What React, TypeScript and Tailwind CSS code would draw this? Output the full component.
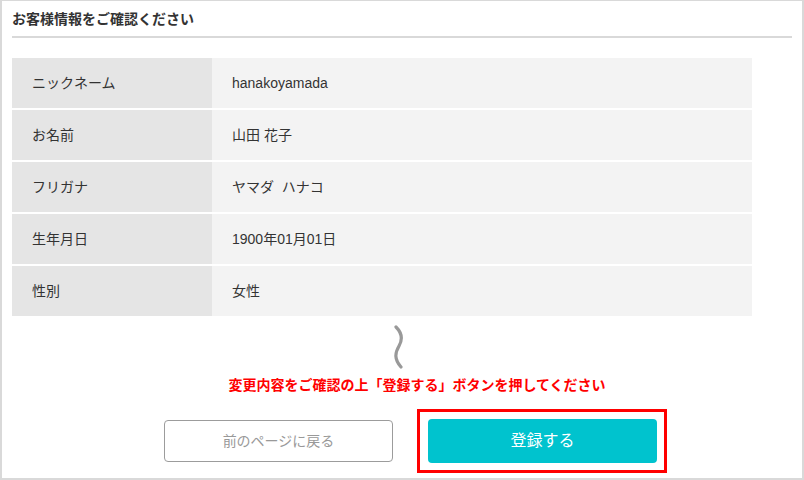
import React from "react";

const rows: [string, string][] = [
  ["ニックネーム", "hanakoyamada"],
  ["お名前", "山田 花子"],
  ["フリガナ", "ヤマダ\u00a0\u00a0ハナコ"],
  ["生年月日", "1900年01月01日"],
  ["性別", "女性"],
];

const font = { fontFamily: '"Liberation Sans", "Noto Sans CJK JP", sans-serif' };

export default function App() {
  return (
    <div
      className="w-[804px] h-[480px] bg-white border-2 border-t border-[#d9d9d9] text-[#333] box-border overflow-hidden"
      style={font}
    >
      <div className="px-[10px] pt-[8px]">
        <div className="pb-[7px] border-b-2 border-[#d9d9d9] text-[14px] leading-[20px] font-bold text-[#333]">
          お客様情報をご確認ください
        </div>
        <div className="mt-[20px] w-[740px] flex flex-col gap-[2px]">
          {rows.map(([k, v]) => (
            <div key={k} className="flex h-[50px] text-[14px]">
              <div className="w-[200px] bg-[#e5e5e5] pl-[20px] flex items-center">{k}</div>
              <div className="flex-1 bg-[#f3f3f3] pl-[20px] flex items-center">{v}</div>
            </div>
          ))}
        </div>
      </div>
      <div className="flex justify-center pr-[6px] mt-[9px]">
        <svg width="14" height="44" viewBox="0 0 14 44" fill="none">
          <path
            d="M4 2 C 10 8, 11 14, 7 21 C 3 28, 2 34, 9 42"
            stroke="#999999"
            strokeWidth="3.2"
            strokeLinecap="round"
          />
        </svg>
      </div>
      <div className="flex justify-center pl-[30px] mt-[6px]">
        <div className="text-[14px] leading-[20px] font-bold text-[#ff0000]">
          変更内容をご確認の上「登録する」ボタンを押してください
        </div>
      </div>
      <div className="flex justify-center items-center pl-[27px] mt-[14px] gap-6">
        <div className="w-[229px] h-[42px] border border-[#9c9c9c] rounded-[4px] flex items-center justify-center text-[14px] text-[#999]">
          前のページに戻る
        </div>
        <div className="w-[250px] h-[64px] border-[3px] border-[#ff0000] pt-[7px] pl-[8px]">
          <div className="w-[229px] h-[44px] bg-[#00c3ce] rounded-[4px] flex items-center justify-center text-[16px] text-white">
            登録する
          </div>
        </div>
      </div>
    </div>
  );
}
